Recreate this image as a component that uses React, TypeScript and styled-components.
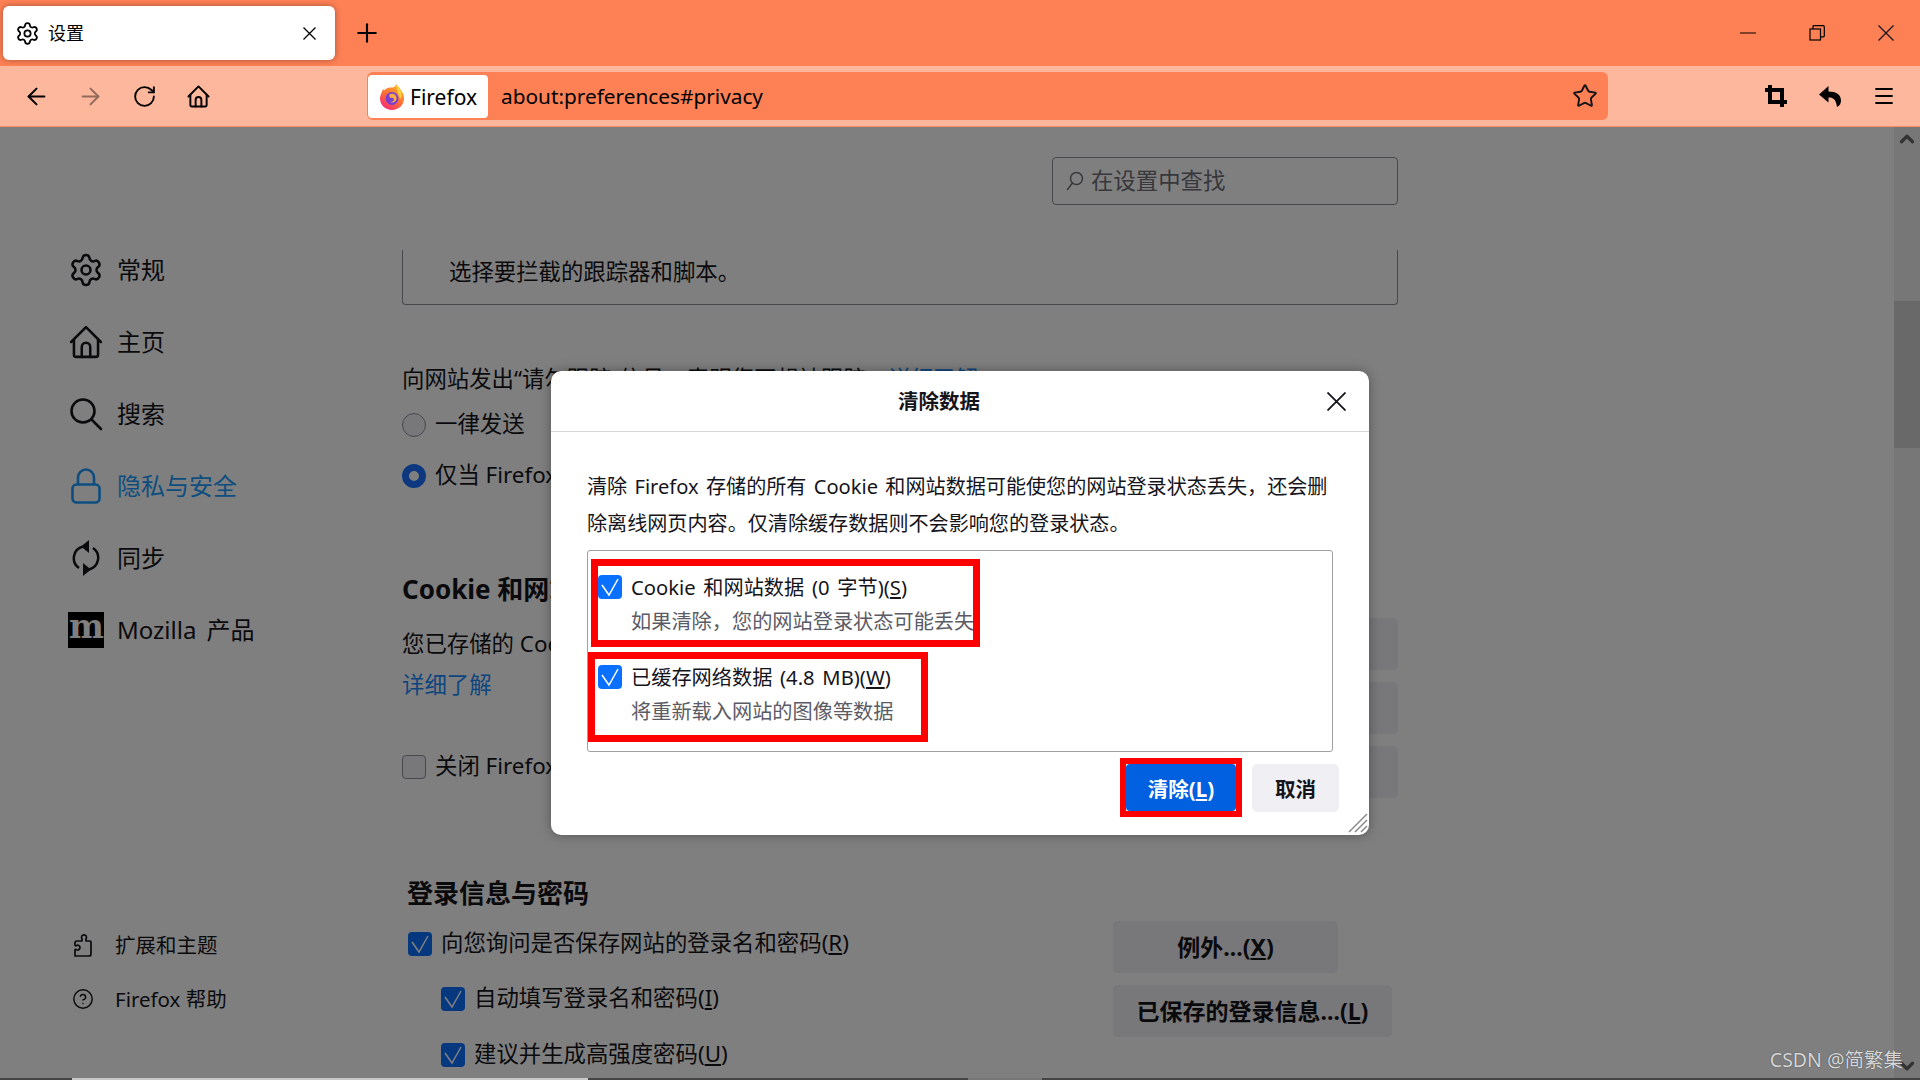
import * as React from 'react'
import styled, { createGlobalStyle } from 'styled-components'
import { ArrowLeft, ArrowRight, ChevronDown, ChevronUp, CircleHelp, Menu, Minus, Plus, RotateCw, Settings, Star } from 'lucide-react'

const UI_FONT = `'Noto Sans', 'Noto Sans CJK SC', sans-serif`

const GlobalStyle = createGlobalStyle`
  html, body {
    margin: 0;
    padding: 0;
    width: 1920px;
    height: 1080px;
    overflow: hidden;
    background: #fff;
  }

  * {
    box-sizing: border-box;
  }

  body {
    font-family: ${UI_FONT};
    color: #15141a;
  }
`

const Window = styled.div`
  position: relative;
  width: 1920px;
  height: 1080px;
  display: flex;
  flex-direction: column;
  overflow: hidden;
`

const TabBar = styled.div`
  height: 66px;
  flex: none;
  background: #fe8055;
  display: flex;
  align-items: flex-start;
  padding: 6px 0 0 3px;
`

const Tab = styled.div`
  width: 332px;
  height: 54px;
  background: #fff;
  border-radius: 6px;
  box-shadow: 0 0 6px rgba(0, 0, 0, 0.35);
  display: flex;
  align-items: center;
  padding: 0 19px 0 12px;
  font-size: 18px;
  color: #000;
`

const TabTitle = styled.span`
  flex: 1;
  margin-left: 8px;
  line-height: 24px;
  padding-bottom: 1px;
`

const NewTab = styled.div`
  width: 30px;
  height: 54px;
  margin-left: 17px;
  display: flex;
  align-items: center;
  justify-content: center;
`

const WindowControls = styled.div`
  margin-left: auto;
  margin-top: -6px;
  display: flex;
`

const WindowControl = styled.div`
  width: 69px;
  height: 66px;
  display: flex;
  align-items: center;
  justify-content: center;
`

const NavBar = styled.div`
  height: 61px;
  flex: none;
  background: #fdb79c;
  border-bottom: 1px solid #fe8a62;
  display: flex;
  align-items: center;
  padding: 0 9px;
`

const NavButton = styled.div<{ $faded?: boolean }>`
  width: 54px;
  height: 48px;
  display: flex;
  align-items: center;
  justify-content: center;
  color: #000;
  opacity: ${(p) => (p.$faded ? 0.42 : 1)};
`

const UrlBar = styled.div`
  width: 1241px;
  height: 48px;
  margin-left: 142px;
  background: #fe8055;
  border-radius: 6px;
  display: flex;
  align-items: center;
  padding: 0 10px 0 1px;
`

const Identity = styled.div`
  width: 120px;
  height: 43px;
  margin-top: 1px;
  background: #fff;
  border-radius: 4px;
  display: flex;
  align-items: center;
  padding-left: 12px;
  gap: 6px;
  font-size: 21px;
  color: #000;
`

const UrlText = styled.span`
  flex: 1;
  margin-left: 13px;
  font-size: 20.8px;
  color: #000;
`

const NavRight = styled.div`
  margin-left: auto;
  display: flex;
`

const Content = styled.div`
  position: relative;
  flex: 1;
  min-height: 0;
  display: flex;
  background: #fff;
  overflow: hidden;
`

const Sidebar = styled.nav`
  width: 402px;
  flex: none;
  display: flex;
  flex-direction: column;
  padding: 107px 0 54px 68px;
`

const CategoryItem = styled.div<{ $active?: boolean }>`
  height: 72px;
  display: flex;
  align-items: center;
  gap: 13px;
  font-size: 24px;
  word-spacing: 4px;
  color: ${(p) => (p.$active ? '#1a9cff' : '#15141a')};
`

const CategoryIcon = styled.span`
  width: 36px;
  height: 36px;
  display: flex;
  align-items: center;
  justify-content: center;
`

const MozillaMark = styled.span`
  width: 36px;
  height: 36px;
  background: #000;
  color: #fff;
  display: flex;
  align-items: center;
  justify-content: center;
  font-family: 'DejaVu Serif', serif;
  font-weight: 700;
  font-size: 33px;
  line-height: 36px;
  padding-bottom: 7px;
  letter-spacing: -1px;
`

const RowLabel = styled.span<{ $lift?: number }>`
  padding-bottom: ${(p) => p.$lift ?? 3}px;
`

const SidebarFooter = styled.div`
  margin-top: auto;
  padding-left: 4px;
`

const FooterItem = styled.div`
  height: 54px;
  display: flex;
  align-items: center;
  gap: 21px;
  font-size: 20.5px;
`

const Main = styled.main`
  width: 996px;
  flex: none;
  font-size: 22.4px;
  line-height: 30px;
`

const SearchRow = styled.div`
  height: 123px;
  padding-top: 30px;
  display: flex;
  justify-content: flex-end;
`

const SearchBox = styled.div`
  width: 346px;
  height: 48px;
  border: 1px solid #8f8f9d;
  border-radius: 4px;
  display: flex;
  align-items: center;
  padding-left: 13px;
  gap: 7px;
  color: #6f6f78;
`

const TrackerPanel = styled.div`
  height: 55px;
  border: 1px solid #8f8f9d;
  border-top: none;
  border-radius: 0 0 4px 4px;
  padding: 7px 0 0 46px;
`

const Notice = styled.div`
  margin-top: 59px;
  white-space: nowrap;
`

const TextLink = styled.span`
  color: #1a8cff;
`

const RadioRow = styled.div<{ $gap: number }>`
  height: 30px;
  margin-top: ${(p) => p.$gap}px;
  display: flex;
  align-items: center;
  gap: 9px;
  white-space: nowrap;
`

const Radio = styled.span<{ $selected?: boolean }>`
  width: 24px;
  height: 24px;
  flex: none;
  border-radius: 50%;
  background: ${(p) => (p.$selected ? '#fff' : '#f0f0f4')};
  border: ${(p) => (p.$selected ? '7px solid #1a70ff' : '1px solid #8f8f9d')};
`

const SectionTitle = styled.h2<{ $gap: number; $indent?: number }>`
  margin: ${(p) => p.$gap}px 0 0 ${(p) => p.$indent ?? 0}px;
  font-size: 26px;
  line-height: 34px;
  font-weight: 700;
`

const SectionBody = styled.div<{ $sideTop: number }>`
  display: flex;
  justify-content: space-between;

  & > aside {
    padding-top: ${(p) => p.$sideTop}px;
  }
`

const Column = styled.div<{ $top: number; $indent?: number }>`
  padding: ${(p) => p.$top}px 0 0 ${(p) => p.$indent ?? 0}px;
  white-space: nowrap;
`

const Line = styled.div<{ $gap?: number }>`
  margin-top: ${(p) => p.$gap ?? 0}px;
`

const SideButtons = styled.aside`
  width: 285px;
  display: flex;
  flex-direction: column;
  align-items: flex-start;
  gap: 12px;
`

const PageButton = styled.div<{ $width: number }>`
  width: ${(p) => p.$width}px;
  height: 52px;
  border-radius: 5px;
  background: #f0f0f4;
  display: flex;
  align-items: center;
  justify-content: center;
  font-weight: 700;
  font-size: 23px;
  white-space: nowrap;
`

const CheckRow = styled.div<{ $gap?: number; $indent?: number }>`
  margin: ${(p) => p.$gap ?? 0}px 0 0 ${(p) => p.$indent ?? 0}px;
  height: 30px;
  display: flex;
  align-items: center;
  gap: 9px;
`

const CheckBox = styled.span<{ $checked?: boolean }>`
  width: 24px;
  height: 24px;
  flex: none;
  border-radius: 4px;
  background: ${(p) => (p.$checked ? '#0a70ff' : '#f0f0f4')};
  border: ${(p) => (p.$checked ? 'none' : '1px solid #8f8f9d')};
  display: flex;
  align-items: center;
  justify-content: center;
`

const Scrollbar = styled.div`
  width: 26px;
  margin-left: auto;
  flex: none;
  background: #eeeeee;
  display: flex;
  flex-direction: column;
  color: #666;
  align-items: center;
`

const ScrollThumb = styled.div`
  width: 100%;
  height: 147px;
  margin-top: 150px;
  background: #d2d2d2;
`

const ScrollArrow = styled.div<{ $end?: boolean }>`
  height: 24px;
  margin-top: ${(p) => (p.$end ? 'auto' : '0')};
  margin-bottom: ${(p) => (p.$end ? '2px' : '0')};
  display: flex;
  align-items: center;
`

const Backdrop = styled.div`
  position: absolute;
  inset: 0;
  background: rgba(0, 0, 0, 0.5);
  display: flex;
  align-items: center;
  justify-content: center;
`

const Dialog = styled.div`
  position: relative;
  width: 818px;
  height: 464px;
  margin-top: -1px;
  background: #fff;
  border-radius: 10px;
  box-shadow: 0 0 12px rgba(0, 0, 0, 0.35);
  display: flex;
  flex-direction: column;
`

const DialogHeader = styled.header`
  height: 61px;
  flex: none;
  border-bottom: 1px solid #d8d8dc;
  display: flex;
  align-items: center;
  padding-right: 23px;
`

const DialogTitle = styled.h1`
  flex: 1;
  margin: 0;
  text-align: center;
  font-size: 20.5px;
  font-weight: 700;
  line-height: 28px;
`

const DialogBody = styled.div`
  padding: 36px 36px 0;
`

const Description = styled.p`
  margin: 0 0 8px;
  font-size: 20.1px;
  line-height: 37px;
  word-spacing: 2.1px;
  white-space: nowrap;
`

const OptionList = styled.div`
  width: 746px;
  height: 202px;
  border: 1px solid #a0a0a4;
  border-radius: 3px;
  padding-top: 8px;
`

const Highlight = styled.div<{ $width: number; $height: number; $left: number; $gap: number; $pad: number }>`
  width: ${(p) => p.$width}px;
  height: ${(p) => p.$height}px;
  margin: ${(p) => p.$gap}px 0 0 ${(p) => p.$left}px;
  border: 7px solid #fe0000;
  padding: ${(p) => p.$pad}px 0 0 ${(p) => (p.$left ? 0 : 3)}px;
  display: grid;
  grid-template-columns: 24px auto;
  column-gap: 9px;
  align-content: start;
`

const OptionLabel = styled.div`
  font-size: 20.2px;
  line-height: 24px;
  word-spacing: 2.5px;
  white-space: nowrap;
`

const OptionHint = styled.div`
  grid-column: 2;
  margin-top: 8px;
  font-size: 20.2px;
  line-height: 28px;
  color: #5b5b66;
  white-space: nowrap;
`

const DialogFooter = styled.footer`
  margin-top: 6px;
  padding-right: 30px;
  display: flex;
  justify-content: flex-end;
  align-items: flex-start;
  gap: 10px;
`

const ClearMark = styled.div`
  border: 6px solid #fe0000;
  width: 122px;
  height: 59px;
`

const AcceptButton = styled.div`
  height: 100%;
  background: #0060df;
  border-radius: 4px;
  color: #fff;
  font-weight: 700;
  font-size: 20.5px;
  display: flex;
  align-items: center;
  justify-content: center;
`

const CancelButton = styled.div`
  width: 87px;
  height: 48px;
  margin-top: 6px;
  background: #f0f0f4;
  border-radius: 5px;
  font-weight: 700;
  font-size: 20.5px;
  display: flex;
  align-items: center;
  justify-content: center;
`

const Resizer = styled.svg`
  position: absolute;
  right: 1px;
  bottom: 2px;
`

const BottomTrack = styled.div`
  position: absolute;
  left: 0;
  right: 0;
  bottom: 0;
  height: 2px;
  display: grid;
  grid-template-columns: 72px 516px 380px 74px 1fr;
`

const TrackPart = styled.div<{ $tone: string }>`
  background: ${(p) => p.$tone};
`

const Watermark = styled.div`
  position: absolute;
  right: 17px;
  bottom: 7px;
  font-size: 19.5px;
  line-height: 26px;
  color: #d8d8d8;
  text-shadow: 0 0 1px #333;
  white-space: nowrap;
`

const Gear = ({ size }: { size: number }) => <Settings size={size} strokeWidth={1.7} />

const CloseGlyph = ({ size, width = 1.3 }: { size: number; width?: number }) => (
  <svg width={size} height={size} viewBox={`0 0 ${size} ${size}`} fill='none' stroke='currentColor' strokeWidth={width}>
    <path d={`M0.5 0.5 ${size - 0.5} ${size - 0.5}M${size - 0.5} 0.5 0.5 ${size - 0.5}`} />
  </svg>
)

const HomeIcon = ({ size, width = 2 }: { size: number; width?: number }) => (
  <svg width={size} height={size} viewBox='0 0 24 24' fill='none' stroke='currentColor' strokeWidth={width} strokeLinejoin='round' strokeLinecap='round'>
    <path d='M1.5 12 12 1.5 22.500 12' />
    <path d='M3.500 10.500V21a1.500 1.500 0 0 0 1.500 1.500h14a1.500 1.500 0 0 0 1.500-1.500V10.500' />
    <path d='M9 22.500V15.500a3 3 0 0 1 6 0v7' />
  </svg>
)

const SearchIcon = () => (
  <svg width={34} height={34} viewBox='0 0 34 34' fill='none' stroke='currentColor' strokeWidth={2.6} strokeLinecap='round'>
    <circle cx={14} cy={14} r={11.500} />
    <path d='m22.500 22.500 9.500 9.500' />
  </svg>
)

const LockIcon = () => (
  <svg width={30} height={36} viewBox='0 0 30 36' fill='none' stroke='currentColor' strokeWidth={2.600} strokeLinejoin='round'>
    <path d='M7 17V9.500a8 8 0 0 1 16 0V17' />
    <rect x={1.500} y={16.500} width={27} height={18} rx={4} />
  </svg>
)

const SyncIcon = () => (
  <svg width={28} height={36} viewBox='0 0 28 36' fill='none' stroke='currentColor' strokeWidth={2.500}>
    <path d='M11 6.500A12 12 0 0 0 7 28' />
    <path d='M17 29.500A12 12 0 0 0 21 8' />
    <path d='M17 0v13L9 6.500zM11 36V23l8 6.500z' fill='currentColor' stroke='none' />
  </svg>
)

const ExtensionIcon = () => (
  <svg width={22} height={24} viewBox='0 0 22 24' fill='none' stroke='currentColor' strokeWidth={1.700} strokeLinejoin='round'>
    <path d='M3 23h14a2 2 0 0 0 2-2V9a1 1 0 0 0-1-1h-3c-1 0-1.500-.8-1-1.800.6-1.100.7-2 .2-3.200C13.500 1.500 10.500 1.500 9.800 3c-.5 1.200-.4 2.100.2 3.200.5 1 0 1.800-1 1.800H5c-1 0-2 .8-2 2v2c0 .8.800 1 1.400.6 1.500-1 3.600 0 3.600 2s-2.100 3-3.600 2C3.800 16 3 16.200 3 17z' />
  </svg>
)

const FindIcon = () => (
  <svg width={18} height={20} viewBox='0 0 18 20' fill='none' stroke='currentColor' strokeWidth={1.500} strokeLinecap='round'>
    <circle cx={10.500} cy={7.500} r={6} />
    <path d='M6.500 12 1.500 18.500' />
  </svg>
)

const CropIcon = () => (
  <svg width={22} height={22} viewBox='0 0 22 22' fill='none' stroke='#000' strokeWidth={4}>
    <path d='M0 5h17v17' />
    <path d='M5 0v17h17' />
  </svg>
)

const UndoIcon = () => (
  <svg width={22} height={21} viewBox='0 0 22 21' fill='#000'>
    <path d='M9.500 0 0 8.500l9.500 8v-5c4.500 0 7.500 1.500 8.500 9.500 3-1.500 4-4 4-6.500C22 8.500 17 5.500 9.500 5.500z' />
  </svg>
)

const RestoreIcon = () => (
  <svg width={16} height={16} viewBox='0 0 16 16' fill='none' stroke='#000' strokeWidth={1.200}>
    <rect x={1} y={4} width={10.500} height={11} />
    <path d='M4 4V1.500a.8.8 0 0 1 .8-.8h9.500a1 1 0 0 1 1 1V11a.8.8 0 0 1-.8.8h-3' />
  </svg>
)

const FirefoxLogo = () => (
  <svg width={24} height={26} viewBox='0 0 24 26'>
    <defs>
      <linearGradient id='foxBody' x1='0.8' y1='0' x2='0.2' y2='1'>
        <stop offset='0' stopColor='#ffb224' />
        <stop offset='0.55' stopColor='#ff6a36' />
        <stop offset='1' stopColor='#f5267e' />
      </linearGradient>
    </defs>
    <path d='M12 3.500C9 3.500 6 4 4 6.500L3 5 1.500 9C.5 11 0 12.500 0 14.500 0 21 5.500 26 12 26s12-5 12-11.500c0-3-1-6-3-8C19.500 3 16 0 15.500 0c.5 2-1 3.500-3.500 3.500z' fill='url(#foxBody)' />
    <path d='M16 1c3 2 5 5 5.500 9 .3 2-.5 4-1.500 5-1-4-3-8-4-14z' fill='#ffd43b' />
    <circle cx={12} cy={14.500} r={6.500} fill='#7b3fd0' />
    <path d='M9.500 10.500c4-2 7.500 1 7 4.500-.4 3-4 4.500-6 3 2 0 3.500-1 3.500-2.500s-2-2-3.500-1.500c-1-1-1.500-2.500-1-3.500z' fill='#ffb03a' />
  </svg>
)

const Tick = () => (
  <svg width={20} height={20} viewBox='0 0 20 20' fill='none' stroke='#fff' strokeWidth={1.500}>
    <path d='m2 8 7 10L18 2' />
  </svg>
)

const App: React.FunctionComponent = () => (
  <>
    <GlobalStyle />
    <Window>
      <TabBar>
        <Tab>
          <Gear size={25} />
          <TabTitle>设置</TabTitle>
          <CloseGlyph size={13} />
        </Tab>
        <NewTab>
          <Plus size={30} strokeWidth={1.700} color='#000' />
        </NewTab>
        <WindowControls>
          <WindowControl><Minus size={26} strokeWidth={1} color='#000' /></WindowControl>
          <WindowControl><RestoreIcon /></WindowControl>
          <WindowControl><CloseGlyph size={16} width={1.200} /></WindowControl>
        </WindowControls>
      </TabBar>

      <NavBar>
        <NavButton><ArrowLeft size={27} strokeWidth={1.800} /></NavButton>
        <NavButton $faded><ArrowRight size={27} strokeWidth={1.800} /></NavButton>
        <NavButton><RotateCw size={25} strokeWidth={1.800} /></NavButton>
        <NavButton><HomeIcon size={23} /></NavButton>
        <UrlBar>
          <Identity>
            <FirefoxLogo />
            <span>Firefox</span>
          </Identity>
          <UrlText>about:preferences#privacy</UrlText>
          <Star size={26} strokeWidth={1.800} color='#15141a' />
        </UrlBar>
        <NavRight>
          <NavButton><CropIcon /></NavButton>
          <NavButton><UndoIcon /></NavButton>
          <NavButton><Menu size={24} strokeWidth={1.800} /></NavButton>
        </NavRight>
      </NavBar>

      <Content>
        <Sidebar>
          <CategoryItem><CategoryIcon><Gear size={40} /></CategoryIcon><RowLabel>常规</RowLabel></CategoryItem>
          <CategoryItem><CategoryIcon><HomeIcon size={34} width={1.800} /></CategoryIcon><RowLabel>主页</RowLabel></CategoryItem>
          <CategoryItem><CategoryIcon><SearchIcon /></CategoryIcon><RowLabel>搜索</RowLabel></CategoryItem>
          <CategoryItem $active><CategoryIcon><LockIcon /></CategoryIcon><RowLabel>隐私与安全</RowLabel></CategoryItem>
          <CategoryItem><CategoryIcon><SyncIcon /></CategoryIcon><RowLabel>同步</RowLabel></CategoryItem>
          <CategoryItem><MozillaMark>m</MozillaMark><RowLabel>Mozilla 产品</RowLabel></CategoryItem>
          <SidebarFooter>
            <FooterItem><ExtensionIcon /><RowLabel>扩展和主题</RowLabel></FooterItem>
            <FooterItem><CircleHelp size={22} strokeWidth={1.600} /><RowLabel>Firefox 帮助</RowLabel></FooterItem>
          </SidebarFooter>
        </Sidebar>

        <Main>
          <SearchRow>
            <SearchBox>
              <FindIcon />
              <RowLabel $lift={1}>在设置中查找</RowLabel>
            </SearchBox>
          </SearchRow>
          <TrackerPanel>选择要拦截的跟踪器和脚本。</TrackerPanel>

          <Notice>向网站发出“请勿跟踪”信号，表明您不想被跟踪。<TextLink>详细了解</TextLink></Notice>
          <RadioRow $gap={16}><Radio /><RowLabel>一律发送</RowLabel></RadioRow>
          <RadioRow $gap={21}><Radio $selected /><RowLabel>仅当 Firefox 设置为阻止已知跟踪器时</RowLabel></RadioRow>

          <SectionTitle $gap={81}>Cookie 和网站数据</SectionTitle>
          <SectionBody $sideTop={12}>
            <Column $top={23}>
              <Line>您已存储的 Cookie、网站数据和缓存目前占用 4.8 MB 磁盘空间。</Line>
              <Line $gap={11}><TextLink>详细了解</TextLink></Line>
              <CheckRow $gap={52}><CheckBox /><RowLabel>关闭 Firefox 时删除 Cookie 和网站数据</RowLabel></CheckRow>
            </Column>
            <SideButtons>
              <PageButton $width={285} />
              <PageButton $width={285} />
              <PageButton $width={285} />
            </SideButtons>
          </SectionBody>

          <SectionTitle $gap={78} $indent={5}>登录信息与密码</SectionTitle>
          <SectionBody $sideTop={11}>
            <Column $top={19} $indent={6}>
              <CheckRow><CheckBox $checked><Tick /></CheckBox><RowLabel>向您询问是否保存网站的登录名和密码(<u>R</u>)</RowLabel></CheckRow>
              <CheckRow $gap={25} $indent={33}><CheckBox $checked><Tick /></CheckBox><RowLabel>自动填写登录名和密码(<u>I</u>)</RowLabel></CheckRow>
              <CheckRow $gap={26} $indent={33}><CheckBox $checked><Tick /></CheckBox><RowLabel>建议并生成高强度密码(<u>U</u>)</RowLabel></CheckRow>
            </Column>
            <SideButtons>
              <PageButton $width={225}><span>例外...(<u>X</u>)</span></PageButton>
              <PageButton $width={279}><span>已保存的登录信息...(<u>L</u>)</span></PageButton>
            </SideButtons>
          </SectionBody>
        </Main>

        <Scrollbar>
          <ScrollArrow><ChevronUp size={22} strokeWidth={3.500} /></ScrollArrow>
          <ScrollThumb />
          <ScrollArrow $end><ChevronDown size={22} strokeWidth={3.500} /></ScrollArrow>
        </Scrollbar>

        <Backdrop>
          <Dialog>
            <DialogHeader>
              <DialogTitle>清除数据</DialogTitle>
              <CloseGlyph size={19} width={1.800} />
            </DialogHeader>
            <DialogBody>
              <Description>
                清除 Firefox 存储的所有 Cookie 和网站数据可能使您的网站登录状态丢失，还会删<br />
                除离线网页内容。仅清除缓存数据则不会影响您的登录状态。
              </Description>
              <OptionList>
                <Highlight $width={389} $height={88} $left={3} $gap={0} $pad={9}>
                  <CheckBox $checked><Tick /></CheckBox>
                  <OptionLabel>Cookie 和网站数据 (0 字节)(<u>S</u>)</OptionLabel>
                  <OptionHint>如果清除，您的网站登录状态可能丢失</OptionHint>
                </Highlight>
                <Highlight $width={340} $height={90} $left={0} $gap={5} $pad={6}>
                  <CheckBox $checked><Tick /></CheckBox>
                  <OptionLabel>已缓存网络数据 (4.8 MB)(<u>W</u>)</OptionLabel>
                  <OptionHint>将重新载入网站的图像等数据</OptionHint>
                </Highlight>
              </OptionList>
            </DialogBody>
            <DialogFooter>
              <ClearMark>
                <AcceptButton><span>清除(<u>L</u>)</span></AcceptButton>
              </ClearMark>
              <CancelButton>取消</CancelButton>
            </DialogFooter>
            <Resizer width={20} height={20} viewBox='0 0 20 20' stroke='#8a8a8a' strokeWidth={1.500}>
              <path d='M1 19 19 1M7 19 19 7M13 19l6-6' />
            </Resizer>
          </Dialog>
        </Backdrop>
      </Content>

      <BottomTrack>
        <TrackPart $tone='#444' />
        <TrackPart $tone='#c8c8c8' />
        <TrackPart $tone='#444' />
        <TrackPart $tone='#777' />
        <TrackPart $tone='#444' />
      </BottomTrack>
      <Watermark>CSDN @简繁集</Watermark>
    </Window>
  </>
)

export default App
